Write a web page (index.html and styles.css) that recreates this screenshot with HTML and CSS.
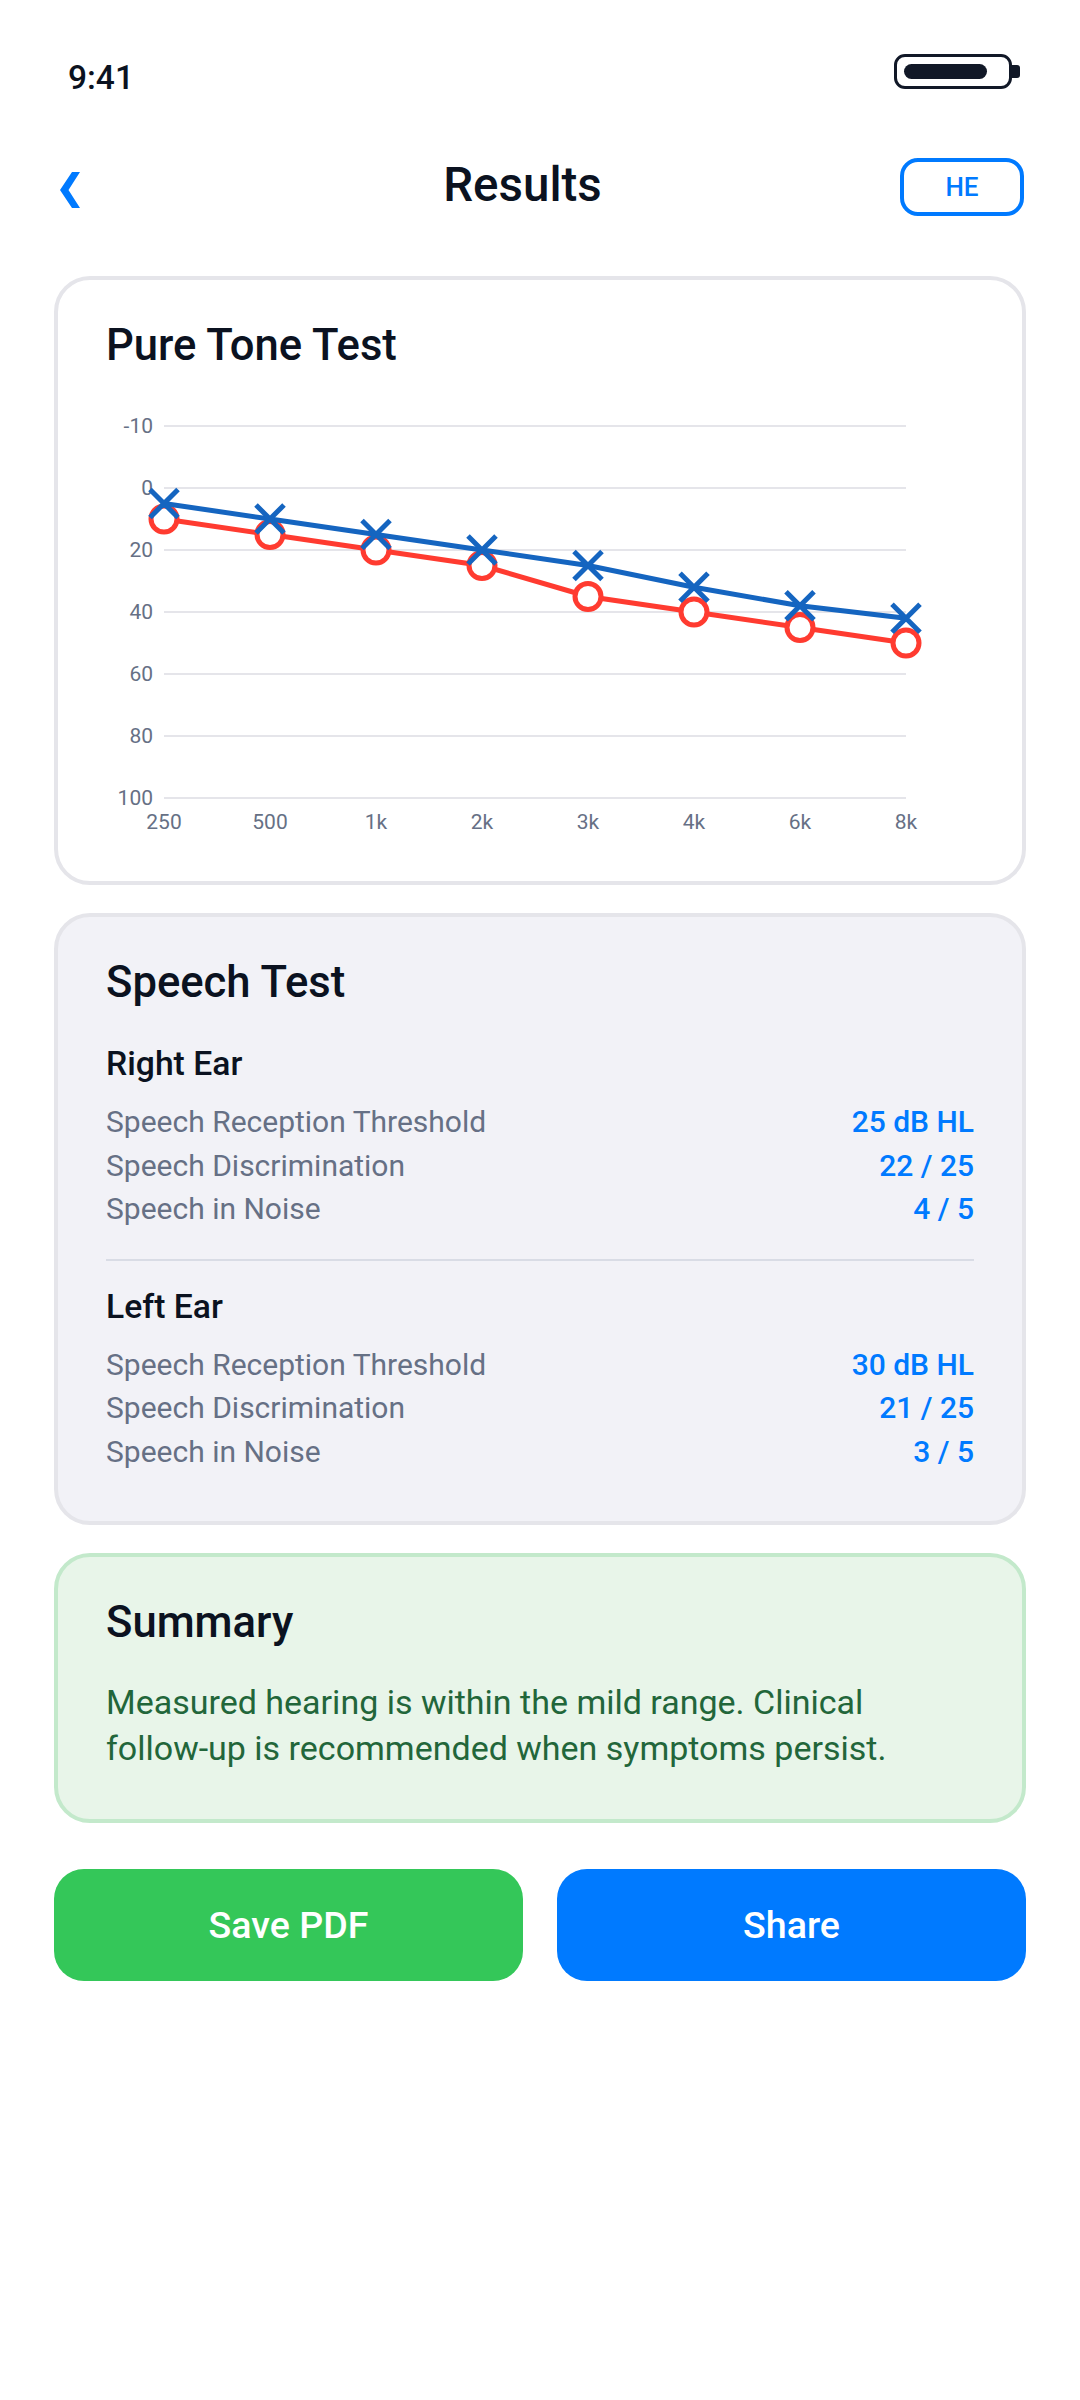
FILE: index.html
```html
<!DOCTYPE html>
<html lang="en">
<head>
<meta charset="utf-8">
<title>Results</title>
<link rel="stylesheet" href="styles.css">
</head>
<body>
<div class="screen">
  <div class="status">
    <span class="time">9:41</span>
    <div class="battery"><div class="battery-body"><div class="battery-fill"></div></div><div class="battery-nub"></div></div>
  </div>
  <header class="nav">
    <button class="back" aria-label="Back">
      <svg class="chevron" width="26" height="36" viewBox="0 0 26 36"><polygon points="18,0 26,0 14.5,18 26,36 18,36 6,18" fill="#007aff"/></svg>
    </button>
    <h1 class="page-title">Results</h1>
    <button class="lang">HE</button>
  </header>
  <main class="content">
    <section class="card">
      <h2 class="card-title">Pure Tone Test</h2>
      <svg class="chart" width="868" height="441" viewBox="106 392 868 441">
        <g class="grid">
          <line x1="164" x2="906" y1="426" y2="426"/>
          <line x1="164" x2="906" y1="488" y2="488"/>
          <line x1="164" x2="906" y1="550" y2="550"/>
          <line x1="164" x2="906" y1="612" y2="612"/>
          <line x1="164" x2="906" y1="674" y2="674"/>
          <line x1="164" x2="906" y1="736" y2="736"/>
          <line x1="164" x2="906" y1="798" y2="798"/>
        </g>
        <g class="y-labels">
          <text x="153" y="433">-10</text>
          <text x="153" y="495">0</text>
          <text x="153" y="557">20</text>
          <text x="153" y="619">40</text>
          <text x="153" y="681">60</text>
          <text x="153" y="743">80</text>
          <text x="153" y="805">100</text>
        </g>
        <g class="x-labels">
          <text x="164" y="829">250</text>
          <text x="270" y="829">500</text>
          <text x="376" y="829">1k</text>
          <text x="482" y="829">2k</text>
          <text x="588" y="829">3k</text>
          <text x="694" y="829">4k</text>
          <text x="800" y="829">6k</text>
          <text x="906" y="829">8k</text>
        </g>
        <polyline class="line-right" points="164,519 270,534.5 376,550 482,565.5 588,596.5 694,612 800,627.5 906,643"/>
        <g class="marks-right">
          <circle cx="164" cy="519" r="13"/>
          <circle cx="270" cy="534.5" r="13"/>
          <circle cx="376" cy="550" r="13"/>
          <circle cx="482" cy="565.5" r="13"/>
          <circle cx="588" cy="596.5" r="13"/>
          <circle cx="694" cy="612" r="13"/>
          <circle cx="800" cy="627.5" r="13"/>
          <circle cx="906" cy="643" r="13"/>
        </g>
        <polyline class="line-left" points="164,503.5 270,519 376,534.5 482,550 588,565.5 694,587.2 800,605.8 906,618.2"/>
        <path class="marks-left" d="M150 489.5l28 28m0-28l-28 28M256 505l28 28m0-28l-28 28M362 520.5l28 28m0-28l-28 28M468 536l28 28m0-28l-28 28M574 551.5l28 28m0-28l-28 28M680 573.2l28 28m0-28l-28 28M786 591.8l28 28m0-28l-28 28M892 604.2l28 28m0-28l-28 28"/>
      </svg>
    </section>

    <section class="card card-muted">
      <h2 class="card-title">Speech Test</h2>
      <div class="ear">
        <h3 class="ear-title">Right Ear</h3>
        <div class="row"><span class="row-label">Speech Reception Threshold</span><span class="row-value">25 dB HL</span></div>
        <div class="row"><span class="row-label">Speech Discrimination</span><span class="row-value">22 / 25</span></div>
        <div class="row"><span class="row-label">Speech in Noise</span><span class="row-value">4 / 5</span></div>
      </div>
      <div class="ear ear-second">
        <h3 class="ear-title">Left Ear</h3>
        <div class="row"><span class="row-label">Speech Reception Threshold</span><span class="row-value">30 dB HL</span></div>
        <div class="row"><span class="row-label">Speech Discrimination</span><span class="row-value">21 / 25</span></div>
        <div class="row"><span class="row-label">Speech in Noise</span><span class="row-value">3 / 5</span></div>
      </div>
    </section>

    <section class="card card-success">
      <h2 class="card-title">Summary</h2>
      <p class="summary-text">Measured hearing is within the mild range. Clinical follow-up is recommended when symptoms persist.</p>
    </section>

    <div class="actions">
      <button class="action action-save">Save PDF</button>
      <button class="action action-share">Share</button>
    </div>
  </main>
</div>
</body>
</html>
```
FILE: styles.css
```css
* { box-sizing: border-box; }
html, body { margin: 0; padding: 0; background: #fff; }
body { font-family: Roboto, "Liberation Sans", sans-serif; color: #0b1220; }
h1, h2, h3, p { margin: 0; font: inherit; }
button { font: inherit; border: 0; background: none; padding: 0; margin: 0; }

.screen { width: 1080px; height: 2400px; padding: 0 54px; overflow: hidden; }

.status { height: 142px; padding-top: 54px; display: flex; justify-content: space-between; align-items: flex-start; }
.time { font-size: 33.5px; line-height: 48px; margin-left: 14px; font-weight: 500; }
.battery { display: flex; align-items: center; margin-right: 6px; }
.battery-body { width: 118px; height: 35px; border: 3px solid #111827; border-radius: 11px; padding: 7px; }
.battery-fill { width: 83px; height: 15px; background: #111827; border-radius: 8px; }
.battery-nub { width: 8px; height: 13px; background: #111827; border-radius: 0 3px 3px 0; }

.nav { display: flex; justify-content: space-between; align-items: center; height: 74px; padding: 15px 2px 0 0; }
.back { width: 91px; height: 58px; display: flex; align-items: center; }
.chevron { display: block; margin-top: 7px; }
.page-title { font-size: 47.5px; line-height: 58px; position: relative; top: -2px; font-weight: 500; }
.lang { width: 124px; height: 58px; border: 4px solid #007aff; border-radius: 18px; color: #007aff; font-size: 26px; font-weight: 500; }

.content { padding-top: 60px; display: flex; flex-direction: column; gap: 28px; }

.card { border: 4px solid #e5e5ea; border-radius: 36px; background: #fff; padding: 40px 48px 48px; }
.card-muted { background: #f2f2f7; }
.card-success { background: #e8f5e9; border-color: #c3e9cb; }
.card-title { font-size: 43.6px; line-height: 52px; color: #0b1220; font-weight: 500; }

.chart { display: block; margin-top: 20px; overflow: visible; }
.grid line { stroke: #e5e5ea; stroke-width: 2; }
.y-labels text { font-size: 21px; fill: #667085; text-anchor: end; }
.x-labels text { font-size: 21px; fill: #667085; text-anchor: middle; }
.line-right { fill: none; stroke: #ff3b30; stroke-width: 5; }
.marks-right circle { fill: #fff; stroke: #ff3b30; stroke-width: 5; }
.line-left { fill: none; stroke: #1565c0; stroke-width: 5; }
.marks-left { fill: none; stroke: #1565c0; stroke-width: 5; }

.ear { padding-top: 31px; }
.ear-title { font-size: 33.7px; line-height: 48px; margin-bottom: 12px; color: #0b1220; font-weight: 500; }
.ear-second { margin-top: 28px; border-top: 2px solid #d9dce5; padding-top: 22px; }
.row { display: flex; justify-content: space-between; align-items: center; height: 43.5px; font-size: 30px; }
.row-label { color: #667085; }
.row-value { color: #007aff; font-weight: 500; }

.summary-text { font-size: 34px; line-height: 46px; color: #22663a; margin-top: 30px; max-width: 800px; }

.actions { display: flex; gap: 34px; margin-top: 18px; }
.action { flex: 1; height: 112px; border-radius: 30px; color: #fff; font-size: 37.6px; font-weight: 500; }
.action-save { background: #34c759; }
.action-share { background: #007aff; }
```
